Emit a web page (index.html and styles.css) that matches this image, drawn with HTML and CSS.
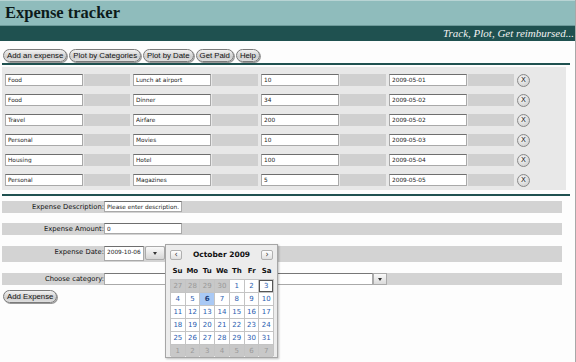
FILE: index.html
```html
<!DOCTYPE html>
<html>
<head>
<meta charset="utf-8">
<link rel="stylesheet" href="styles.css">
</head>
<body>
<div class="page">
  <header class="masthead">
    <div class="title-band"><h1>Expense tracker</h1></div>
    <div class="tag-band"><span class="tagline">Track, Plot, Get reimbursed...</span></div>
  </header>

  <nav class="nav">
    <button class="pill">Add an expense</button>
    <button class="pill">Plot by Categories</button>
    <button class="pill">Plot by Date</button>
    <button class="pill">Get Paid</button>
    <button class="pill">Help</button>
  </nav>

  <div class="rule"></div>

  <section class="list">
    <div class="row">
      <div class="cell"><input class="field" value="Food"><span class="pad"></span></div>
      <div class="cell"><input class="field" value="Lunch at airport"><span class="pad"></span></div>
      <div class="cell"><input class="field" value="10"><span class="pad"></span></div>
      <div class="cell"><input class="field" value="2009-05-01"><span class="pad"></span></div>
      <button class="xbtn">X</button>
    </div>
    <div class="row">
      <div class="cell"><input class="field" value="Food"><span class="pad"></span></div>
      <div class="cell"><input class="field" value="Dinner"><span class="pad"></span></div>
      <div class="cell"><input class="field" value="34"><span class="pad"></span></div>
      <div class="cell"><input class="field" value="2009-05-02"><span class="pad"></span></div>
      <button class="xbtn">X</button>
    </div>
    <div class="row">
      <div class="cell"><input class="field" value="Travel"><span class="pad"></span></div>
      <div class="cell"><input class="field" value="Airfare"><span class="pad"></span></div>
      <div class="cell"><input class="field" value="200"><span class="pad"></span></div>
      <div class="cell"><input class="field" value="2009-05-02"><span class="pad"></span></div>
      <button class="xbtn">X</button>
    </div>
    <div class="row">
      <div class="cell"><input class="field" value="Personal"><span class="pad"></span></div>
      <div class="cell"><input class="field" value="Movies"><span class="pad"></span></div>
      <div class="cell"><input class="field" value="10"><span class="pad"></span></div>
      <div class="cell"><input class="field" value="2009-05-03"><span class="pad"></span></div>
      <button class="xbtn">X</button>
    </div>
    <div class="row">
      <div class="cell"><input class="field" value="Housing"><span class="pad"></span></div>
      <div class="cell"><input class="field" value="Hotel"><span class="pad"></span></div>
      <div class="cell"><input class="field" value="100"><span class="pad"></span></div>
      <div class="cell"><input class="field" value="2009-05-04"><span class="pad"></span></div>
      <button class="xbtn">X</button>
    </div>
    <div class="row">
      <div class="cell"><input class="field" value="Personal"><span class="pad"></span></div>
      <div class="cell"><input class="field" value="Magazines"><span class="pad"></span></div>
      <div class="cell"><input class="field" value="5"><span class="pad"></span></div>
      <div class="cell"><input class="field" value="2009-05-05"><span class="pad"></span></div>
      <button class="xbtn">X</button>
    </div>
  </section>

  <div class="rule rule-low"></div>

  <form class="form">
    <div class="frow frow-1">
      <label class="flabel">Expense Description:</label>
      <input class="field fin" value="Please enter description...">
    </div>
    <div class="frow frow-2">
      <label class="flabel">Expense Amount:</label>
      <input class="field fin" value="0">
    </div>
    <div class="frow frow-3">
      <label class="flabel">Expense Date:</label>
      <input class="field fdate" value="2009-10-06">
      <span class="ddbtn"><span class="tri"></span></span>
    </div>
    <div class="frow frow-4">
      <label class="flabel">Choose category:</label>
      <span class="selbox"></span>
      <span class="selbtn"><span class="tri"></span></span>
    </div>
    <div class="submit"><button class="pill">Add Expense</button></div>
  </form>

  <div class="cal">
    <div class="cal-head">
      <span class="cal-nav">&lsaquo;</span>
      <span class="cal-title">October 2009</span>
      <span class="cal-nav">&rsaquo;</span>
    </div>
    <div class="cal-days">
      <span>Su</span><span>Mo</span><span>Tu</span><span>We</span><span>Th</span><span>Fr</span><span>Sa</span>
    </div>
    <div class="cal-grid">
      <span class="d out">27</span><span class="d out">28</span><span class="d out">29</span><span class="d out">30</span><span class="d">1</span><span class="d">2</span><span class="d today">3</span>
      <span class="d">4</span><span class="d">5</span><span class="d sel">6</span><span class="d">7</span><span class="d">8</span><span class="d">9</span><span class="d">10</span>
      <span class="d">11</span><span class="d">12</span><span class="d">13</span><span class="d">14</span><span class="d">15</span><span class="d">16</span><span class="d">17</span>
      <span class="d">18</span><span class="d">19</span><span class="d">20</span><span class="d">21</span><span class="d">22</span><span class="d">23</span><span class="d">24</span>
      <span class="d">25</span><span class="d">26</span><span class="d">27</span><span class="d">28</span><span class="d">29</span><span class="d">30</span><span class="d">31</span>
      <span class="d out">1</span><span class="d out">2</span><span class="d out">3</span><span class="d out">4</span><span class="d out">5</span><span class="d out">6</span><span class="d out">7</span>
    </div>
  </div>
</div>
</body>
</html>
```

FILE: styles.css
```css
* { box-sizing: border-box; }
html, body { margin: 0; padding: 0; background: #fdfdfd; }
body { width: 576px; height: 362px; overflow: hidden; font-family: "DejaVu Sans", "Liberation Sans", sans-serif; }

.page { position: relative; width: 576px; height: 362px; border-right: 1px solid #a8a8a8; }

.masthead { display: flex; flex-direction: column; }
.title-band { height: 26px; background: #8fbcbc; border-top: 1px solid #b8d4d4; border-bottom: 1px solid #6d9a9a; padding-left: 5px; }
.title-band h1 { margin: 0; font-family: "Liberation Serif", "DejaVu Serif", serif; font-weight: bold; font-size: 16.5px; line-height: 24px; color: #0c1a1a; }
.tag-band { height: 15px; background: #1f5150; display: flex; justify-content: flex-end; align-items: center; padding-right: 1px; }
.tagline { font-family: "Liberation Serif", "DejaVu Serif", serif; font-style: italic; font-size: 11px; color: #f2f2f2; line-height: 15px; }

.nav { display: flex; gap: 2px; padding: 8px 0 0 3px; height: 22px; align-items: flex-start; }
.pill { height: 13px; padding: 0 3px; margin: 0; border: 1px solid #7a7a7a; border-radius: 7px; background: linear-gradient(#f2f2f2, #cfcfcf 60%, #dedede); font-family: "Liberation Sans", "DejaVu Sans", sans-serif; font-size: 7.8px; line-height: 11px; color: #111; box-shadow: 1px 1px 0 #999; }

.rule { height: 2px; background: #1f5150; margin: 0 5px 0 2px; }
.rule-low { margin-top: 4px; }

.list { margin: 2px 9px 0 2px; background: #e8e8e8; padding: 7px 0 4px 3px; display: flex; flex-direction: column; gap: 8px; }
.row { display: flex; align-items: center; height: 12px; }
.cell { display: flex; align-items: center; gap: 1px; margin-right: 3px; }
.pad { width: 46px; height: 12px; background: #d0d0d0; }

.field { width: 78px; height: 12px; margin: 0; padding: 0 2px; border: 1px solid #a9a9a9; border-top-color: #6e6e6e; background: #fff; font-family: "DejaVu Sans", sans-serif; font-size: 5.8px; color: #222; outline: none; }

.xbtn { width: 13px; height: 13px; margin: 0; padding: 0; border: 1px solid #888; border-radius: 50%; background: radial-gradient(circle at 40% 35%, #f8f8f8, #c8c8c8); font-family: "DejaVu Sans", sans-serif; font-size: 7px; line-height: 11px; color: #222; }

.form { margin: 0; padding: 5px 13px 0 2px; display: flex; flex-direction: column; }
.frow { display: flex; align-items: flex-start; background: #d3d3d3; height: 12px; }
.frow-2 { margin-top: 10px; }
.frow-3 { margin-top: 11px; height: 16px; }
.frow-4 { margin-top: 11px; }
.flabel { width: 102px; text-align: right; font-size: 6.8px; line-height: 12px; color: #111; white-space: nowrap; }
.fin { width: 78px; height: 11px; }
.fdate { width: 40px; height: 15px; padding-bottom: 3px; font-size: 5.8px; }
.ddbtn { width: 20px; height: 14px; margin-left: 1px; background: linear-gradient(#fafafa, #d6d6d6); border: 1px solid #aaa; border-radius: 2px; display: flex; align-items: center; justify-content: center; }
.tri { width: 0; height: 0; border-left: 2px solid transparent; border-right: 2px solid transparent; border-top: 3px solid #333; }
.selbox { width: 269px; height: 12px; background: #fff; border: 1px solid #a9a9a9; border-top-color: #777; }
.selbtn { width: 14px; height: 12px; background: linear-gradient(#fafafa, #dadada); border: 1px solid #aaa; display: flex; align-items: center; justify-content: center; }
.submit { display: flex; padding: 5px 0 0 1px; }

.cal { position: absolute; left: 165px; top: 244px; width: 113px; height: 114px; background: #ececec; border: 1px solid #a6a6a6; box-shadow: 1px 1px 2px rgba(0,0,0,0.25); padding: 4px 4px 0 4px; font-family: "DejaVu Sans", sans-serif; }
.cal-head { display: flex; align-items: center; justify-content: space-between; height: 11px; }
.cal-nav { width: 12px; height: 10px; border: 1px solid #b0b0b0; border-radius: 2px; background: linear-gradient(#fff, #e0e0e0); font-size: 8px; line-height: 7px; text-align: center; color: #333; }
.cal-title { font-size: 7.5px; font-weight: bold; color: #111; }
.cal-days { display: grid; grid-template-columns: repeat(7, 1fr); margin-top: 4px; height: 13px; align-items: center; width: 104px; }
.cal-days span { text-align: center; font-size: 7px; font-weight: bold; color: #111; }
.cal-grid { margin-top: 2px; width: 104px; height: 77px; display: grid; grid-template-columns: repeat(7, 1fr); grid-template-rows: repeat(6, 1fr); gap: 1px; background: #c4c4c4; border: 1px solid #c4c4c4; }
.d { background: #fff; text-align: center; font-size: 7px; line-height: 12px; color: #2a5db0; }
.d.out { background: #c8c8c8; color: #999; }
.d.sel { background: #a9c9f5; color: #1a3f7a; font-weight: bold; }
.d.today { box-shadow: inset 0 0 0 1px #555; }
```
